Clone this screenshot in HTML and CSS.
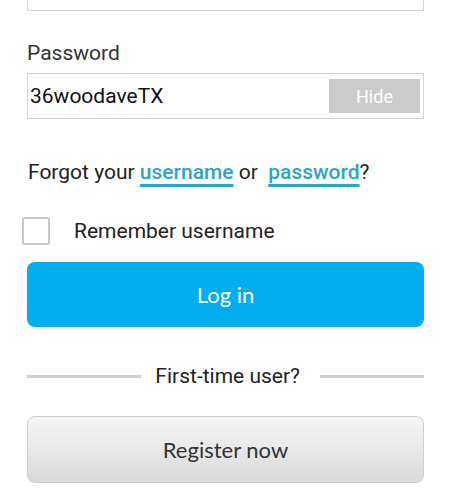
FILE: index.html
```html
<!doctype html>
<html lang="en">
  <head>
    <meta charset="UTF-8" />
    <meta name="viewport" content="width=device-width, initial-scale=1.0" />
    <title>Log in</title>
    <link rel="stylesheet" href="styles.css">
  </head>

  <body>
    <form class="login">
      <div class="field field-username"></div>

      <label class="label" for="password">Password</label>
      <div class="field">
        <input id="password" class="field-input" type="text" value="36woodaveTX" />
        <button type="button" class="hide-btn">Hide</button>
      </div>

      <p class="forgot">
        Forgot your <a href="#">username</a> or&nbsp; <a href="#">password</a>?
      </p>

      <label class="remember">
        <span class="checkbox"></span>
        <span>Remember username</span>
      </label>

      <button type="submit" class="btn btn-primary">Log in</button>

      <div class="divider">
        <span class="divider-line divider-line-left"></span>
        <span class="divider-text">First-time user?</span>
        <span class="divider-line"></span>
      </div>

      <button type="button" class="btn btn-secondary">Register now</button>
    </form>
  </body>
</html>
```

FILE: styles.css
```css
body {
  margin: 0;
  background: #fff;
  font-family: 'Roboto', 'Noto Sans', sans-serif;
  color: #222;
}
.login {
  display: flex;
  flex-direction: column;
  padding: 0 26px 0 27px;
}
.field {
  display: flex;
  align-items: center;
  height: 44px;
  border: 1px solid #d4d4d4;
  padding: 0 3px 0 2px;
}
.field-username {
  margin-top: -35px;
}
.label {
  margin-top: 30px;
  margin-bottom: 8px;
  font-size: 21px;
  line-height: 24px;
  color: #333;
}
.field-input {
  flex: 1;
  min-width: 0;
  border: none;
  outline: none;
  padding: 0;
  font-family: inherit;
  font-size: 21px;
  color: #111;
  background: transparent;
}
.hide-btn {
  width: 91px;
  height: 34px;
  border: none;
  background: #cbcbcb;
  color: #fff;
  font-family: inherit;
  font-size: 18px;
}
.forgot {
  margin: 40px 0 0 1px;
  font-size: 21px;
  line-height: 26px;
  color: #222;
}
.forgot a {
  color: #2ba6c8;
  font-weight: 500;
  text-decoration: underline;
  text-decoration-thickness: 3px;
  text-underline-offset: 5px;
}
.remember {
  display: flex;
  align-items: center;
  gap: 24px;
  margin: 32px 0 0 -5px;
  font-size: 21px;
  color: #222;
}
.checkbox {
  width: 24px;
  height: 24px;
  border: 2px solid #c8c8c8;
  border-radius: 2px;
}
.btn {
  height: 65px;
  border-radius: 8px;
  font-family: 'Lato', sans-serif;
  font-size: 22px;
  cursor: pointer;
}
.btn-primary {
  margin-top: 17px;
  border: none;
  background: #02adef;
  color: #fff;
}
.divider {
  display: flex;
  align-items: center;
  margin-top: 37px;
}
.divider-line {
  flex: 1;
  height: 3px;
  background: #d0d0d0;
}
.divider-line-left {
  flex: 1.1;
}
.divider-text {
  padding: 0 20px 0 14px;
  font-size: 21px;
  line-height: 24px;
  color: #222;
}
.btn-secondary {
  height: 67px;
  margin-top: 28px;
  border: 1px solid #cfcfcf;
  background: linear-gradient(#f6f6f6, #dadada);
  color: #333;
}
```
